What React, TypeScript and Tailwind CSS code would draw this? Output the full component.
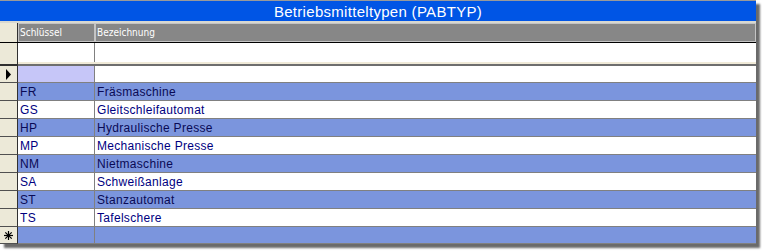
import React from "react";

// Betriebsmitteltypen data sheet (Access style)
const rows = [
  { key: "FR", name: "Fräsmaschine" },
  { key: "GS", name: "Gleitschleifautomat" },
  { key: "HP", name: "Hydraulische Presse" },
  { key: "MP", name: "Mechanische Presse" },
  { key: "NM", name: "Nietmaschine" },
  { key: "SA", name: "Schweißanlage" },
  { key: "ST", name: "Stanzautomat" },
  { key: "TS", name: "Tafelschere" },
];

function Selector({ children, className = "" }: { children?: React.ReactNode; className?: string }) {
  return (
    <div className={`w-[18px] shrink-0 bg-[#ece9d8] border-r border-b border-r-[#303030] border-b-[#505050] flex items-center justify-center ${className}`}>
      {children}
    </div>
  );
}

export default function App() {
  return (
    <div className="w-[762px] h-[252px] bg-white overflow-hidden font-['Liberation_Sans',Arial,sans-serif]">
      <div className="w-[756px] flex flex-col shadow-[4px_4px_2px_#6a6a6a]">
        {/* Title bar */}
        <div className="h-[23px] border-t border-t-[#9a9a9a] border-b-2 border-b-[#d8d8d0] bg-[#0055e5] flex items-center justify-center">
          <span className="text-white text-[15px] leading-none tracking-[0.3px]">Betriebsmitteltypen (PABTYP)</span>
        </div>

        {/* Column headers */}
        <div className="flex h-[20px] border-b border-b-black bg-[#878787]">
          <div className="w-[18px] shrink-0 bg-[#ece9d8] border-r border-r-[#303030]" />
          <div className="w-[77px] shrink-0 border border-[#c4c4c4] flex items-center pl-[1px]">
            <span className="text-white text-[10px] font-['DejaVu_Sans_Condensed',sans-serif]">Schlüssel</span>
          </div>
          <div className="flex-1 border border-[#c4c4c4] flex items-center pl-[1px]">
            <span className="text-white text-[10px] font-['DejaVu_Sans_Condensed',sans-serif]">Bezeichnung</span>
          </div>
        </div>

        {/* Filter row */}
        <div className="flex h-[19px]">
          <div className="w-[18px] shrink-0 bg-[#ece9d8] border-r border-r-[#303030]" />
          <div className="w-[77px] shrink-0 bg-white border-r border-r-[#808080]" />
          <div className="flex-1 bg-white" />
        </div>
        <div className="flex h-[4px]">
          <div className="w-[18px] shrink-0 bg-[#ece9d8] border-r border-r-[#303030] border-b-2 border-b-[#303030]" />
          <div className="flex-1 flex flex-col">
            <div className="h-[2px] bg-[#f0ead8]" />
            <div className="h-[2px] bg-[#6e6e6e]" />
          </div>
        </div>

        {/* Current row */}
        <div className="flex h-[17px]">
          <Selector>
            <svg width="7" height="11" viewBox="0 0 7 11">
              <path d="M1 0 L6 5.5 L1 11 Z" fill="#000" />
            </svg>
          </Selector>
          <div className="w-[77px] shrink-0 bg-[#c6c6f8] border-r border-b border-[#808080]" />
          <div className="flex-1 bg-white border-b border-[#808080]" />
        </div>

        {/* Records */}
        {rows.map((r, i) => {
          const bg = i % 2 === 0 ? "bg-[#7b95dd] text-[#0a0a55]" : "bg-white text-[#00007f]";
          return (
            <div key={r.key} className="flex h-[18px] text-[12px] tracking-[0.3px]">
              <Selector />
              <div className={`w-[77px] shrink-0 ${bg} border-r border-b border-[#808080] flex items-center pl-[2px]`}>
                {r.key}
              </div>
              <div className={`flex-1 ${bg} border-b border-[#808080] flex items-center pl-[2px]`}>
                {r.name}
              </div>
            </div>
          );
        })}

        {/* New record row */}
        <div className="flex h-[17px]">
          <Selector className="border-b-[#303030]">
            <svg width="9" height="9" viewBox="0 0 9 9" stroke="#000" strokeWidth="1.2">
              <line x1="4.5" y1="0" x2="4.5" y2="9" />
              <line x1="0" y1="4.5" x2="9" y2="4.5" />
              <line x1="1.3" y1="1.3" x2="7.7" y2="7.7" />
              <line x1="7.7" y1="1.3" x2="1.3" y2="7.7" />
            </svg>
          </Selector>
          <div className="w-[77px] shrink-0 bg-[#7b95dd] border-r border-b border-[#808080]" />
          <div className="flex-1 bg-[#7b95dd] border-b border-[#808080]" />
        </div>
      </div>
    </div>
  );
}
